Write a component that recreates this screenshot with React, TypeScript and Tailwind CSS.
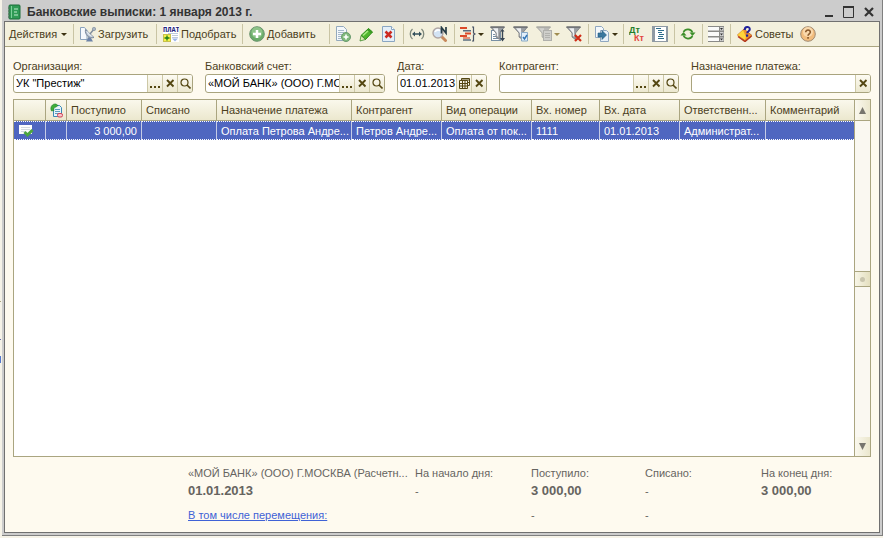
import { useState } from "react";
import type { ReactNode } from "react";

// ---------- icons (16x16) ----------

function Svg({ children, w = 16, h = 16 }: { children: ReactNode; w?: number; h?: number }) {
  return (
    <svg width={w} height={h} viewBox={`0 0 ${w} ${h}`} className="shrink-0" aria-hidden="true">
      {children}
    </svg>
  );
}

const Funnel = ({ gray = false }: { gray?: boolean }) => (
  <g>
    <path d="M0.500 1h14L9.500 7v6.500L6 11V7z" fill={gray ? "#b9b9b6" : "#9a9ea2"} stroke={gray ? "#adada8" : "#76797d"} strokeWidth="0.800" />
    <path d="M0.500 1h14" stroke={gray ? "#a3a39e" : "#5a5d61"} />
    <path d="M3 2.200h5L8.200 7v3.800L6.800 10V7z" fill={gray ? "#d2d2ce" : "#eef0f2"} />
  </g>
);

const JournalIcon = () => (
  <Svg w={14} h={16}>
    <rect x="2" y="1" width="11" height="14" rx="1" fill="#2f9a55" stroke="#1c6e3a" />
    <path d="M4.500 2v12" stroke="#7fd09a" />
    <path d="M7 5h4M7 8h3M7 11h4" stroke="#c2ecce" />
    <path d="M1 4h2M1 7h2M1 10h2M1 13h2" stroke="#56705e" />
  </Svg>
);

const LoadIcon = () => (
  <Svg>
    <path d="M0.500 1.500h4l2.500 3v9h-6.500z" fill="#f6f9fc" stroke="#8ba3bd" />
    <path d="M5.500 3.500c-1 5 3.500 9.500 8.500 8z" fill="#b4c0cf" stroke="#7b899b" />
    <path d="M6.500 4.500l6.500 6.500c-3 0-6.500-3-6.500-6.500z" fill="#e2e8ee" />
    <path d="M10 8l4-5" stroke="#7f8c9c" strokeWidth="1.400" />
    <circle cx="14" cy="3" r="1.700" fill="#a9b5c3" stroke="#7b899b" strokeWidth="0.600" />
    <path d="M8.500 11L6 15.500h7L11 12z" fill="#6d83a8" />
  </Svg>
);

const PickIcon = () => (
  <Svg>
    <rect x="0" y="0" width="16" height="16" fill="#fff" />
    <path d="M5 7.500h10M9 9.500h6M9 11.500h6" stroke="#bfc9de" />
    <path d="M9 12.500h6L12 15.500z" fill="#9db6ea" />
    <text x="0" y="6" fontSize="7" fontWeight="bold" fontFamily="Liberation Mono, monospace" fill="#23237c">
      ПЛАТ
    </text>
    <rect x="0.500" y="8.500" width="7" height="7" fill="#f6f04a" stroke="#c8c04c" />
    <path d="M4 9.500v5M1.500 12h5" stroke="#187a18" strokeWidth="1.300" />
  </Svg>
);

const AddIcon = () => (
  <Svg>
    <circle cx="8" cy="8" r="7.300" fill="#69ad68" stroke="#6c9370" />
    <circle cx="8" cy="6.500" r="5.500" fill="#a5d29e" opacity="0.600" />
    <path d="M8 4v8M4 8h8" stroke="#fff" strokeWidth="2.500" />
  </Svg>
);

const CopyAddIcon = () => (
  <Svg>
    <path d="M1.500 0.500h7l3 3v11h-10z" fill="#f4f8fb" stroke="#93a9bd" />
    <path d="M3 4.500h6M3 6.500h6M3 8.500h4M3 10.500h3M3 12.500h3" stroke="#a5b8ca" />
    <circle cx="11" cy="11" r="4.500" fill="#7fb97b" stroke="#6a9a6e" />
    <path d="M11 8.500v5M8.500 11h5" stroke="#fff" strokeWidth="1.600" />
  </Svg>
);

const PencilIcon = () => (
  <Svg>
    <path d="M3 9.500L10.500 2.500l4 3.500L7.500 13.500z" fill="#4fb52c" stroke="#2a8a18" />
    <path d="M5 9.500l6-5.500" stroke="#a6ea80" strokeWidth="1.600" />
    <path d="M10.500 2.500l4 3.500-1.500 1.500L9 4z" fill="#3c9a24" />
    <path d="M3 9.500l4.500 4-5.500 1.500z" fill="#dcebb4" stroke="#2a7d18" strokeWidth="0.700" />
  </Svg>
);

const DeleteIcon = () => (
  <Svg>
    <path d="M1.500 0.500h9l3 3v12h-12z" fill="#e4eff9" stroke="#8aa6c2" />
    <path d="M10.500 0.500v3h3" fill="#fff" stroke="#8aa6c2" />
    <path d="M4.500 5.500l6 6M10.500 5.500l-6 6" stroke="#cc2a20" strokeWidth="2.500" />
  </Svg>
);

const IntervalIcon = () => (
  <Svg>
    <path d="M3.500 3C0.500 5.500 0.500 10.500 3.500 13M12.500 3c3 2.500 3 7.500 0 10" fill="none" stroke="#7e887c" strokeWidth="1.300" />
    <path d="M5 8h6" stroke="#33505c" strokeWidth="1.500" />
    <path d="M3 8l3-2.500v5zM13 8l-3-2.500v5z" fill="#33505c" />
  </Svg>
);

const FindNumberIcon = () => (
  <Svg>
    <path d="M9.500 10.500l4 4" stroke="#c8895c" strokeWidth="3" strokeLinecap="round" />
    <circle cx="6" cy="7" r="5" fill="#d3e3f4" stroke="#b0a6a4" strokeWidth="1.400" />
    <path d="M3 6c1-2 3-2.500 5-1.500" fill="none" stroke="#fff" strokeWidth="1.600" />
    <path d="M9.500 7.500V1.500L14 7V1" fill="none" stroke="#263c46" strokeWidth="1.700" />
  </Svg>
);

const StructureIcon = () => (
  <Svg>
    <path d="M0 2h7M5 7.500h6M0 10h7" stroke="#dc4a2a" strokeWidth="1.800" />
    <path d="M3 4.800h8M3 14h8" stroke="#5b6d80" strokeWidth="1.600" />
    <path d="M3 12h7" stroke="#dc6a50" strokeWidth="1.400" />
    <path d="M12 1h1.500v6l1.500 1-1.500 1v6H12" fill="none" stroke="#4a5566" strokeWidth="1.200" />
  </Svg>
);

const FilterSortIcon = () => (
  <Svg>
    <rect x="1.500" y="4.500" width="9" height="10" fill="#fff" stroke="#7890a5" />
    <path d="M3 8.500h2M3 10.500h3M3 12.500h6" stroke="#7890a5" />
    <Funnel />
    <path d="M12.500 4v9" stroke="#384654" strokeWidth="1.400" />
    <path d="M10.500 5.500L12.500 3l2 2.500zM10 12l2.500 3.500L15 12z" fill="#384654" />
  </Svg>
);

const FilterCheckIcon = () => (
  <Svg>
    <Funnel />
    <path d="M8.500 6.500h6v8.500h-6z" fill="#e2effa" stroke="#86a8c6" />
    <path d="M10 11l1.500 2 2.500-4" fill="none" stroke="#3577b5" strokeWidth="1.500" />
  </Svg>
);

const FilterListIcon = () => (
  <Svg>
    <Funnel gray />
    <rect x="7.500" y="4.500" width="8" height="10" fill="#cfcfcb" stroke="#b0b0ac" />
    <path d="M9 7.500h5M9 9.500h5M9 11.500h5" stroke="#b2b2ae" />
  </Svg>
);

const FilterOffIcon = () => (
  <Svg>
    <Funnel />
    <path d="M9 9l6 6M15 9l-6 6" stroke="#cf2c17" strokeWidth="2.200" />
  </Svg>
);

const GoToIcon = () => (
  <Svg>
    <path d="M1.500 0.500h6l2 2v9h-8z" fill="#f4f8fb" stroke="#8fa7c0" />
    <path d="M6.500 4.500h6l2 2v9h-8z" fill="#e9f1f8" stroke="#8fa7c0" />
    <path d="M4 7h4V4.500l4.500 4.500L8 13.500V11H4z" fill="#3a779e" stroke="#245a7c" strokeWidth="0.600" />
  </Svg>
);

const DtKtIcon = () => (
  <Svg>
    <text x="0" y="7" fontSize="9" fontWeight="bold" fontFamily="Liberation Sans, sans-serif" fill="#1f7d2b">
      Дт
    </text>
    <text x="5" y="15" fontSize="9" fontWeight="bold" fontFamily="Liberation Sans, sans-serif" fill="#e2453f">
      Кт
    </text>
  </Svg>
);

const ReportIcon = () => (
  <Svg>
    <rect x="0" y="0" width="16" height="16" fill="#8f9aa4" />
    <rect x="3" y="1" width="11" height="14" fill="#fff" />
    <path d="M4 2.500h5M6 4.500h6M6 6.500h4M7 8.500h5M6 10.500h5M6 12.500h6" stroke="#2f6d8c" />
  </Svg>
);

const RefreshIcon = () => (
  <Svg>
    <path d="M3.500 6A5 5 0 0 1 12.500 6.500M12.500 10A5 5 0 0 1 3.500 9.500" fill="none" stroke="#3e8f2b" strokeWidth="1.700" />
    <path d="M9.500 6.500h6l-3 3.500zM6.500 9.500h-6l3-3.500z" fill="#3e8f2b" />
  </Svg>
);

const FormIcon = () => (
  <Svg>
    <rect x="0" y="0" width="16" height="16" fill="#8a8a88" />
    <path d="M0 1h11v3.500H0zM0 6h11v4H0zM0 11.500h11V15H0z" fill="#fafafa" />
    <path d="M12 1h3.500v3.500H12zM12 6h3.500v4H12zM12 11.500h3.500V15H12z" fill="#d4d4d4" />
    <path d="M12 2h3l-1.500 2zM12 7.500h3l-1.500 2zM12 12.500h3l-1.500 2z" fill="#333" />
  </Svg>
);

const TipsIcon = () => (
  <Svg>
    <path d="M0.500 9L7 3l8 6.500-6.500 5.500z" fill="#f0932b" stroke="#b8601e" strokeWidth="0.800" />
    <path d="M0.500 9L6 4l3 7-1 3z" fill="#ffd43a" />
    <path d="M1 10.500l7 5 6.500-5.500" fill="none" stroke="#b5371c" strokeWidth="1.500" />
    <path d="M7.800 4C7.500 0.500 12.800 0 12.800 3.200c0 2-2.600 2-2.600 4" fill="none" stroke="#22229c" strokeWidth="2" />
    <rect x="9" y="8.500" width="2.200" height="2.200" fill="#22229c" />
  </Svg>
);

const HelpIcon = () => (
  <Svg>
    <circle cx="8" cy="8" r="7.300" fill="#f2bd7e" stroke="#a08a72" />
    <circle cx="8" cy="6" r="5" fill="#fbe0b8" opacity="0.800" />
    <path d="M5.700 6.200C5.700 3.300 10.500 3.400 10.300 6.200 10.200 7.800 8 7.900 8 9.800" fill="none" stroke="#8a5a2c" strokeWidth="1.600" />
    <rect x="7.200" y="11" width="1.700" height="1.700" fill="#8a5a2c" />
  </Svg>
);

const StatusIcon = () => (
  <Svg w={13} h={15}>
    <path d="M3.500 2.500h6l2 2v9h-8z" fill="#e6f4fb" stroke="#3b8ab5" />
    <path d="M5 6.500h5M5 8.500h5M5 10.500h4" stroke="#5a9dbd" />
    <path d="M1.500 8c-2-4 1-7.500 4.500-7l2 1.500-2 1.500C4 4 3.500 6 4 7.500z" fill="#3fae3a" stroke="#1f7d2b" strokeWidth="0.600" />
    <rect x="7.500" y="10.500" width="5" height="3.500" rx="1.500" fill="#f8c4ca" stroke="#d04458" />
  </Svg>
);

const PostedIcon = () => (
  <Svg>
    <path d="M1 2h13v9H1z" fill="#fdfdfd" />
    <path d="M3 4.500h9M3 6.500h9M3 8.500h4" stroke="#d3dae0" />
    <path d="M6.500 9l3 3 5-5" fill="none" stroke="#4ca53f" strokeWidth="3" />
  </Svg>
);

const CloseSmall = () => (
  <Svg w={9} h={9}>
    <path d="M1 1l6.500 6.500M7.500 1L1 7.500" stroke="#544712" strokeWidth="1.900" />
  </Svg>
);

const Lens = () => (
  <Svg w={11} h={11}>
    <circle cx="4.500" cy="4.500" r="3.500" fill="none" stroke="#544712" strokeWidth="1.200" />
    <path d="M7 7l3.500 3.500" stroke="#544712" strokeWidth="1.600" />
  </Svg>
);

const Dots = () => (
  <Svg w={11} h={11}>
    <path d="M0 8h2v2H0zM4 8h2v2H4zM8 8h2v2H8z" fill="#544712" />
  </Svg>
);

const CalendarIcon = () => (
  <Svg w={11} h={11}>
    <path
      d="M2.500 2.500V0.500h8v7h-2M0.500 2.500h8v8h-8zM0.500 5.500h8M0.500 8h8M3.500 2.500v8M6 2.500v8M2.500 2h8M8 4.500h2.500"
      fill="none"
      stroke="#544712"
    />
  </Svg>
);

// ---------- toolbar ----------

const Caret = ({ off = false }: { off?: boolean }) => (
  <Svg w={6} h={3}>
    <path d="M0 0h6L3 3z" fill={off ? "#a08c50" : "#3c3212"} />
  </Svg>
);

const Sep = () => <span className="mx-[2px] h-5 w-px shrink-0 bg-[#c9c4a4]" />;

function IconButton({ label, icon, drop, off }: { label: string; icon: ReactNode; drop?: boolean; off?: boolean }) {
  return (
    <button
      type="button"
      aria-label={label}
      disabled={off}
      className={`flex h-6 shrink-0 items-center gap-[2px] pl-[3px] ${drop ? "w-[30px]" : "w-[23px]"}`}
    >
      {icon}
      {drop && <Caret off={off} />}
    </button>
  );
}

const textButton = "flex h-6 shrink-0 items-center gap-[2px] pl-1";

function Toolbar() {
  return (
    <div className="flex h-[25px] items-center overflow-hidden border-b border-[#aaa580] bg-[#f3f0dd]">
      <button type="button" className="flex h-6 w-[66px] shrink-0 items-center gap-1 pl-1">
        Действия <Caret />
      </button>
      <Sep />
      <button type="button" className={`${textButton} w-[78px]`}>
        <LoadIcon /> Загрузить
      </button>
      <Sep />
      <button type="button" className={`${textButton} w-[81px]`}>
        <PickIcon /> Подобрать
      </button>
      <Sep />
      <button type="button" className={`${textButton} w-[82px]`}>
        <AddIcon />
        <span>
          <span className="underline">Д</span>обавить
        </span>
      </button>
      <Sep />
      <IconButton label="Добавить копированием" icon={<CopyAddIcon />} />
      <IconButton label="Изменить" icon={<PencilIcon />} />
      <IconButton label="Пометить на удаление" icon={<DeleteIcon />} />
      <Sep />
      <IconButton label="Интервал дат" icon={<IntervalIcon />} />
      <IconButton label="Поиск по номеру" icon={<FindNumberIcon />} />
      <Sep />
      <IconButton label="Структура" icon={<StructureIcon />} drop />
      <IconButton label="Отбор и сортировка" icon={<FilterSortIcon />} />
      <IconButton label="Отбор по значению" icon={<FilterCheckIcon />} />
      <IconButton label="История отборов" icon={<FilterListIcon />} drop off />
      <IconButton label="Отключить отбор" icon={<FilterOffIcon />} />
      <Sep />
      <IconButton label="Перейти" icon={<GoToIcon />} drop />
      <Sep />
      <IconButton label="Проводки" icon={<DtKtIcon />} />
      <IconButton label="Отчет" icon={<ReportIcon />} />
      <Sep />
      <IconButton label="Обновить" icon={<RefreshIcon />} />
      <Sep />
      <IconButton label="Настройка" icon={<FormIcon />} />
      <Sep />
      <button type="button" className={`${textButton} w-[64px]`}>
        <TipsIcon /> Советы
      </button>
      <IconButton label="Справка" icon={<HelpIcon />} />
    </div>
  );
}

// ---------- filters ----------

type Action = "dots" | "clear" | "open" | "calendar";

const actionIcons: Record<Action, ReactNode> = {
  dots: <Dots />,
  clear: <CloseSmall />,
  open: <Lens />,
  calendar: <CalendarIcon />,
};

const actionLabels: Record<Action, string> = {
  dots: "Выбрать",
  clear: "Очистить",
  open: "Открыть",
  calendar: "Календарь",
};

function Field({ id, label, initial, actions, narrow }: { id: string; label: string; initial: string; actions: Action[]; narrow?: boolean }) {
  const [value, setValue] = useState(initial);
  return (
    <div className={`min-w-0 ${narrow ? "flex-1" : "flex-2"}`}>
      <label htmlFor={id} className="block truncate leading-4">
        {label}
      </label>
      <div className="flex h-[19px] overflow-hidden rounded-[3px] border border-[#a9a47e] bg-white">
        <input
          id={id}
          value={value}
          onChange={(e) => setValue(e.target.value)}
          className="min-w-0 flex-1 pl-[2px] text-black outline-none"
        />
        {actions.map((a) => (
          <button
            key={a}
            type="button"
            aria-label={`${label} ${actionLabels[a]}`}
            onClick={() => a === "clear" && setValue("")}
            className="flex w-[15px] shrink-0 items-center justify-center border-l border-[#cdc8a6] bg-linear-to-b from-[#fdfbf3] to-[#ece8cf]"
          >
            {actionIcons[a]}
          </button>
        ))}
      </div>
    </div>
  );
}

// ---------- table ----------

const columns = [
  { title: "", width: "w-[32px]", value: <PostedIcon /> },
  { title: <StatusIcon />, width: "w-[21px]", value: "" },
  { title: "Поступило", width: "w-[75px]", value: "3 000,00", right: true },
  { title: "Списано", width: "w-[75px]", value: "" },
  { title: "Назначение платежа", width: "w-[135px]", value: "Оплата Петрова Андре..." },
  { title: "Контрагент", width: "w-[90px]", value: "Петров Андре..." },
  { title: "Вид операции", width: "w-[90px]", value: "Оплата от пок..." },
  { title: "Вх. номер", width: "w-[68px]", value: "1111" },
  { title: "Вх. дата", width: "w-[80px]", value: "01.01.2013" },
  { title: "Ответственн...", width: "w-[86px]", value: "Администрат..." },
  { title: "Комментарий", width: "", value: "" },
];

function Statements() {
  return (
    <div className="mt-[6px] flex flex-1 border border-[#aaa580] bg-white">
      <div className="min-w-0 flex-1">
        <table className="w-full table-fixed border-separate border-spacing-0 leading-4">
          <thead>
            <tr className="h-[21px] bg-linear-to-b from-[#faf8ec] to-[#ebe7cd]">
              {columns.map((c, i) => (
                <th
                  key={i}
                  className={`overflow-hidden border-b border-[#aaa580] pl-1 text-left font-normal whitespace-nowrap ${c.width} ${i < columns.length - 1 ? "border-r" : ""}`}
                >
                  {c.title}
                </th>
              ))}
            </tr>
          </thead>
          <tbody>
            <tr className="h-[19px] bg-[#4f66c0] text-white">
              {columns.map((c, i) => (
                <td
                  key={i}
                  className={`overflow-hidden border-y border-dotted border-y-white pl-1 whitespace-nowrap ${c.right ? "pr-1 text-right" : ""} ${i < columns.length - 1 ? "border-r border-r-[#c5cbe6] [border-right-style:solid]" : ""}`}
                >
                  {c.value}
                </td>
              ))}
            </tr>
          </tbody>
        </table>
      </div>
      <div className="flex w-4 shrink-0 flex-col border-l border-[#aaa580] bg-[#faf8f1]">
        <button type="button" aria-label="Вверх" className="flex h-[21px] items-center justify-center border-b border-[#aaa580] bg-linear-to-r from-[#faf8ee] to-[#ebe7cd]">
          <Svg w={7} h={7}>
            <path d="M3.500 0L7 7H0z" fill="#77756e" />
          </Svg>
        </button>
        <div className="flex flex-1 flex-col justify-center">
          <div className="flex h-4 items-center justify-center border-y border-[#aaa580] bg-linear-to-r from-[#f8f6e8] to-[#e4dfbf]">
            <span className="h-[5px] w-[5px] rounded-full bg-[#c9c5ae]" />
          </div>
        </div>
        <button type="button" aria-label="Вниз" className="flex h-[19px] items-center justify-center bg-linear-to-r from-[#faf8ee] to-[#ebe7cd]">
          <Svg w={7} h={7}>
            <path d="M3.500 7L7 0H0z" fill="#77756e" />
          </Svg>
        </button>
      </div>
    </div>
  );
}

function Totals() {
  return (
    <div className="grid grid-cols-[175fr_227fr_116fr_114fr_116fr_110fr] pt-2 pb-[9px] text-[#66645f] *:min-w-0 *:whitespace-nowrap">
      <div className="col-start-2 leading-4">«МОЙ БАНК» (ООО) Г.МОСКВА (Расчетн...</div>
      <div className="leading-4">На начало дня:</div>
      <div className="leading-4">Поступило:</div>
      <div className="leading-4">Списано:</div>
      <div className="leading-4">На конец дня:</div>
      <div className="col-start-2 text-[13px] leading-5 font-bold">01.01.2013</div>
      <div className="leading-5">-</div>
      <div className="text-[13px] leading-5 font-bold">3 000,00</div>
      <div className="leading-5">-</div>
      <div className="text-[13px] leading-5 font-bold">3 000,00</div>
      <a href="#transfers" className="col-start-2 mt-[6px] leading-4 text-[#3f62d6] underline">
        В том числе перемещения:
      </a>
      <div className="col-start-4 mt-[6px] leading-4">-</div>
      <div className="mt-[6px] leading-4">-</div>
    </div>
  );
}

export default function App() {
  return (
    <div className="relative flex min-h-screen flex-col bg-[#f6f3e8] pb-[2px] pl-[2px] font-['Liberation_Sans',Arial,sans-serif] text-[11px] text-[#4b401c]">
      {/* edge of the window underneath */}
      <span className="absolute top-[356px] left-0 h-[7px] w-px bg-[#5578cc]" />
      <span className="absolute top-[339px] left-0 h-px w-px bg-[#6a6aa8]" />
      <span className="absolute top-[301px] left-0 h-px w-px bg-[#aaa580]" />

      <div className="flex flex-1 flex-col border-r border-b border-[#808080] bg-[#cccccc] px-[2px] pb-[2px]">
        <header className="flex h-[21px] items-center pt-[2px] pr-px pl-[3px] text-[#333]">
          <JournalIcon />
          <h1 className="ml-[6px] flex-1 truncate text-[12px] font-bold">Банковские выписки: 1 января 2013 г.</h1>
          <button type="button" aria-label="Свернуть" className="flex w-5 justify-center">
            <Svg w={12} h={12}>
              <path d="M2 10h8" stroke="#333" strokeWidth="2" />
            </Svg>
          </button>
          <button type="button" aria-label="Развернуть" className="flex w-5 justify-center">
            <Svg w={12} h={12}>
              <path d="M0.500 1v10.500h10V1" fill="none" stroke="#333" />
              <path d="M0 1h11" stroke="#333" strokeWidth="2" />
            </Svg>
          </button>
          <button type="button" aria-label="Закрыть" className="flex w-5 justify-center">
            <Svg w={12} h={12}>
              <path d="M2 2l8 8M10 2l-8 8" stroke="#333" strokeWidth="2.200" />
            </Svg>
          </button>
        </header>

        <main className="flex flex-1 flex-col border border-[#707070] bg-[#fefaef]">
          <Toolbar />
          <div className="flex flex-1 flex-col px-2 pt-[11px]">
            <div className="flex gap-3">
              <Field id="org" label="Организация:" initial={'УК "Престиж"'} actions={["dots", "clear", "open"]} />
              <Field id="account" label="Банковский счет:" initial="«МОЙ БАНК» (ООО) Г.МОСКВА" actions={["dots", "clear", "open"]} />
              <Field id="date" label="Дата:" initial="01.01.2013" actions={["calendar", "clear"]} narrow />
              <Field id="partner" label="Контрагент:" initial="" actions={["dots", "clear", "open"]} />
              <Field id="purpose" label="Назначение платежа:" initial="" actions={["clear"]} />
            </div>
            <Statements />
            <Totals />
          </div>
        </main>
      </div>
    </div>
  );
}
